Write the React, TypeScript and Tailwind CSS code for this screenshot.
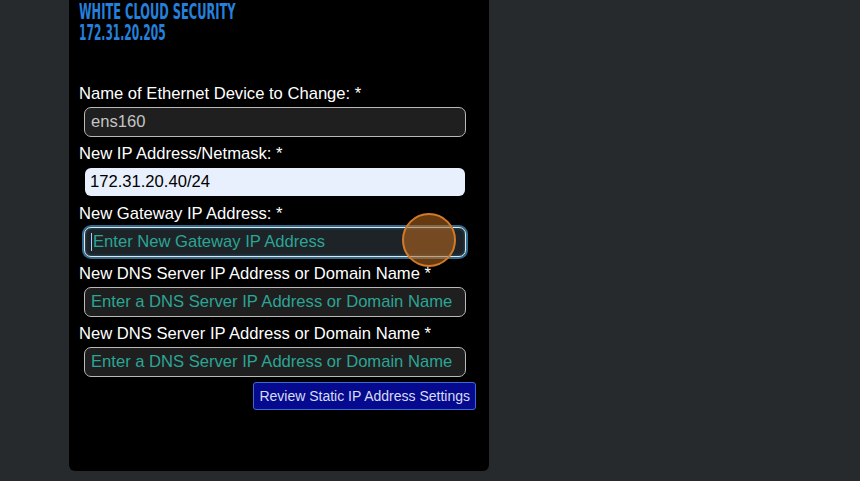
import React from "react";

const fields = [
  { label: "Name of Ethernet Device to Change: *", value: "ens160", kind: "filled" },
  { label: "New IP Address/Netmask: *", value: "172.31.20.40/24", kind: "autofill" },
  { label: "New Gateway IP Address: *", placeholder: "Enter New Gateway IP Address", kind: "focus" },
  { label: "New DNS Server IP Address or Domain Name *", placeholder: "Enter a DNS Server IP Address or Domain Name", kind: "empty" },
  { label: "New DNS Server IP Address or Domain Name *", placeholder: "Enter a DNS Server IP Address or Domain Name", kind: "empty" },
];

function Field({ f }: { f: (typeof fields)[number] }) {
  let box = "ml-[5px] w-[382px] h-[30px] rounded-[7px] border border-[#b9b9b9] bg-[#1f1f1f] flex items-center px-[6px] text-[16.6px]";
  if (f.kind === "autofill") box = "ml-[6px] my-[1px] w-[380px] h-[28px] rounded-[6px] bg-[#e8f0fe] flex items-center px-[5px] text-[16.6px]";
  if (f.kind === "focus")
    box = "ml-[5px] w-[382px] h-[30px] rounded-[7px] border border-[#e6e6e6] bg-[#1d2326] flex items-center px-[6px] text-[16.6px] shadow-[0_0_0_2px_#2e6b8f,inset_0_0_3px_#2e6b8f]";

  return (
    <div className="flex flex-col">
      <div className="h-[22px] pt-[2px] leading-[20px] text-[16.6px] text-white mb-[3px]">{f.label}</div>
      <div className={box}>
        {f.kind === "filled" && <span className="text-[#c4c4c4]">{f.value}</span>}
        {f.kind === "autofill" && <span className="text-black">{f.value}</span>}
        {f.kind === "focus" && (
          <>
            <span className="w-px h-[18px] bg-[#9fd0ff] mr-px" />
            <span className="text-[#2ba595]">{f.placeholder}</span>
          </>
        )}
        {f.kind === "empty" && <span className="text-[#2ba595]">{f.placeholder}</span>}
      </div>
    </div>
  );
}

export default function App() {
  return (
    <div className="w-[860px] h-[481px] bg-[#272a2d] overflow-hidden" style={{ fontFamily: '"Liberation Sans", Arial, sans-serif' }}>
      <div className="relative ml-[69px] w-[420px] h-[471px] bg-black rounded-b-[6px] px-[10px] pt-[2px]">
        <div
          className="text-[#2580dc] font-bold text-[20.5px] leading-[20px] whitespace-nowrap"
          style={{ fontFamily: '"DejaVu Sans Condensed", "DejaVu Sans", sans-serif', fontStretch: "condensed" }}
        >
          <div className="h-[21px] origin-left scale-x-[0.62]">WHITE CLOUD SECURITY</div>
          <div className="h-[19px] origin-left scale-x-[0.58]">172.31.20.205</div>
        </div>
        <div className="mt-[40px] flex flex-col gap-[5px]">
          {fields.map((f, i) => (
            <Field key={i} f={f} />
          ))}
        </div>
        <div className="flex justify-end mt-[5px] mr-[3px]">
          <button className="h-[28px] px-[5px] rounded-[3px] border border-[#3d6ad6] bg-[#060a8e] text-[#d6dcf2] text-[14px]">
            Review Static IP Address Settings
          </button>
        </div>
        <div className="absolute left-[333px] top-[213px] w-[54px] h-[54px] rounded-full border-2 border-[#d17a2c] bg-[rgba(190,105,30,0.55)]" />
      </div>
    </div>
  );
}
